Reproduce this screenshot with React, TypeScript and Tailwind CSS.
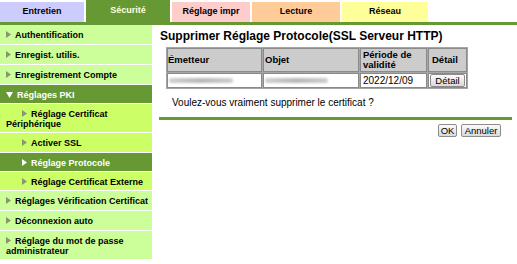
import React from 'react';

const font = "font-['Liberation_Sans',Arial,sans-serif]";

interface Tab {
  label: string;
  width: string;
  bg: string;
  active?: boolean;
}

const tabs: Tab[] = [
  { label: 'Entretien', width: 'w-[84px]', bg: 'bg-[#ccccff]' },
  { label: 'Sécurité', width: 'w-[84px]', bg: 'bg-[#669933]', active: true },
  { label: 'Réglage impr', width: 'w-[78px]', bg: 'bg-[#ffcccc]' },
  { label: 'Lecture', width: 'w-[88px]', bg: 'bg-[#ffcc99]' },
  { label: 'Réseau', width: 'w-[86px]', bg: 'bg-[#ffff99]' },
];

interface MenuItem {
  label: string;
  sub?: boolean;
  tone: 'pale' | 'bright' | 'dark';
  open?: boolean;
  h: string;
}

// heights include the 1px white separator
const menu: MenuItem[] = [
  { label: 'Authentification', tone: 'pale', h: 'h-[20px]' },
  { label: 'Enregist. utilis.', tone: 'pale', h: 'h-[20px]' },
  { label: 'Enregistrement Compte', tone: 'pale', h: 'h-[20px]' },
  { label: 'Réglages PKI', tone: 'dark', open: true, h: 'h-[19px]' },
  { label: 'Réglage Certificat Périphérique', sub: true, tone: 'bright', h: 'h-[29px]' },
  { label: 'Activer SSL', sub: true, tone: 'bright', h: 'h-[20px]' },
  { label: 'Réglage Protocole', sub: true, tone: 'dark', h: 'h-[19px]' },
  { label: 'Réglage Certificat Externe', sub: true, tone: 'bright', h: 'h-[19px]' },
  { label: 'Réglages Vérification Certificat', tone: 'pale', h: 'h-[20px]' },
  { label: 'Déconnexion auto', tone: 'pale', h: 'h-[20px]' },
  { label: 'Réglage du mot de passe administrateur', tone: 'pale', h: 'h-[29px]' },
];

const Arrow = ({ down, color }: { down?: boolean; color: string }) =>
  down ? (
    <svg width="7" height="6" viewBox="0 0 7 6" className="inline-block mr-[4px] align-[0px]">
      <polygon points="0,0 7,0 3.5,6" fill={color} />
    </svg>
  ) : (
    <svg width="5" height="7" viewBox="0 0 5 7" className="inline-block mr-[4px] align-[0px]">
      <polygon points="0,0 5,3.5 0,7" fill={color} />
    </svg>
  );

const toneClass = {
  pale: 'bg-[#ccff99] text-black',
  bright: 'bg-[#ccff66] text-black',
  dark: 'bg-[#669933] text-white',
};

const Blurred = ({ width }: { width: string }) => (
  <div className={`${width} h-[5px] ml-[1px] rounded-full bg-linear-to-r from-[#cfcfcf] via-[#b9b9b9] to-[#cdcdcd] blur-[1px]`} />
);

const SmallButton = ({ children, width }: { children: React.ReactNode; width: string }) => (
  <button
    className={`${width} h-[13px] block border border-[#8c8c8c] rounded-[2px] bg-linear-to-b from-[#fbfbfb] to-[#dadada] text-[9.5px] leading-none text-black`}
  >
    {children}
  </button>
);

export default function App() {
  return (
    <div className={`w-[517px] h-[264px] bg-white overflow-hidden ${font}`}>
      <div className="flex items-end gap-[2px] h-[22px]">
        {tabs.map((t) => (
          <div
            key={t.label}
            className={`${t.width} ${t.bg} flex items-center justify-center font-bold text-[9px] ${
              t.active ? 'h-[22px] text-[#ffffdd]' : 'h-[20px] text-black'
            }`}
          >
            {t.label}
          </div>
        ))}
      </div>
      <div className="h-[3px] bg-[#669933]" />

      <div className="flex">
        <div className="w-[152px] shrink-0">
          {menu.map((m) => (
            <div
              key={m.label}
              className={`${m.h} ${toneClass[m.tone]} border-b border-white pl-[6px] pr-[2px] pt-[5px] font-bold text-[9px] leading-[10px]`}
            >
              {m.sub && <span className="inline-block w-[16px]" />}
              <Arrow down={m.open} color={m.tone === 'dark' ? '#ffffff' : '#8a9670'} />
              {m.label}
            </div>
          ))}
        </div>

        <div className="flex-1 pl-[7px] pr-[5px]">
          <div className="ml-[1px] pt-[4px] text-[12px] leading-[14px] font-bold text-black">
            Supprimer Réglage Protocole(SSL Serveur HTTP)
          </div>

          <table className="ml-[7px] mt-[4px] w-[302px] table-fixed border-separate border-spacing-[1px] bg-[#a6a6a6] text-black">
            <thead>
              <tr>
                <th className="w-[95px] h-[24px] border border-[#8a8a8a] bg-[#cccccc] text-left align-middle font-bold text-[9.5px] leading-[10px] pl-0">
                  Émetteur
                </th>
                <th className="w-[96px] border border-[#8a8a8a] bg-[#cccccc] text-left align-middle font-bold text-[9.5px] leading-[10px] pl-[1px]">
                  Objet
                </th>
                <th className="w-[67px] border border-[#8a8a8a] bg-[#cccccc] text-left align-middle font-bold text-[9.5px] leading-[10px] pl-[2px]">
                  Période de validité
                </th>
                <th className="w-[39px] border border-[#8a8a8a] bg-[#cccccc] text-left align-middle font-bold text-[9.5px] leading-[10px] pl-[3px]">
                  Détail
                </th>
              </tr>
            </thead>
            <tbody>
              <tr>
                <td className="h-[15px] border border-[#8a8a8a] bg-white align-middle leading-none">
                  <Blurred width="w-[64px]" />
                </td>
                <td className="border border-[#8a8a8a] bg-white align-middle leading-none">
                  <Blurred width="w-[63px]" />
                </td>
                <td className="border border-[#8a8a8a] bg-white align-middle text-[10px] leading-[11px] pl-[2px]">
                  2022/12/09
                </td>
                <td className="border border-[#8a8a8a] bg-white align-middle leading-none pl-[1px]">
                  <SmallButton width="w-[35px]">Détail</SmallButton>
                </td>
              </tr>
            </tbody>
          </table>

          <div className="ml-[13px] mt-[8px] text-[10px] leading-[11px] text-black">
            Voulez-vous vraiment supprimer le certificat ?
          </div>

          <div className="mt-[9px] h-[3px] bg-[#669933]" />

          <div className="mt-[4px] mr-[11px] flex justify-end gap-[4px]">
            <SmallButton width="w-[19px]">OK</SmallButton>
            <SmallButton width="w-[40px]">Annuler</SmallButton>
          </div>
        </div>
      </div>
    </div>
  );
}
